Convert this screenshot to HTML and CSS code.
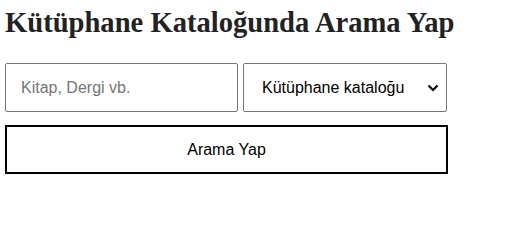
FILE: index.html
```html
<!DOCTYPE html>
<html>
<head>
    <title>Kütüphane Kataloğu</title>
    <link rel="stylesheet" href="styles.css">
</head>
<body>
    <h1>Kütüphane Kataloğunda Arama Yap</h1>

    <form class="search-form">
        <div class="search-row">
            <input type="text" id="searchInput" placeholder="Kitap, Dergi vb.">
            <div class="select-wrap">
                <select id="searchType">
                    <option>Kütüphane kataloğu</option>
                </select>
                <svg class="select-arrow" width="12" height="8" viewBox="0 0 12 8">
                    <path d="M1.5 1.5 L6 6 L10.5 1.5" fill="none" stroke="#000" stroke-width="2.2"/>
                </svg>
            </div>
        </div>
        <button type="button">Arama Yap</button>
    </form>
</body>
</html>
```

FILE: styles.css
```css
body {
    font-family: "Liberation Serif", serif;
    margin: 0;
    padding: 0 5px;
}
h1 {
    font-size: 28.6px;
    margin: 7px 0 24px;
    color: #222;
}
.search-form {
    width: 443px;
}
.search-row {
    display: flex;
    gap: 5px;
}
#searchInput {
    width: 233px;
    height: 49px;
    box-sizing: border-box;
    padding: 0 15px;
    border: 1px solid #767676;
    border-radius: 2px;
    font-family: "Liberation Sans", sans-serif;
    font-size: 16px;
}
#searchInput::placeholder {
    color: #757575;
}
.select-wrap {
    position: relative;
}
#searchType {
    appearance: none;
    width: 204px;
    height: 49px;
    box-sizing: border-box;
    padding: 0 30px 0 18px;
    border: 1px solid #767676;
    border-radius: 2px;
    background: white;
    font-family: "Liberation Sans", sans-serif;
    font-size: 16px;
    color: #000;
}
.select-arrow {
    position: absolute;
    right: 8px;
    top: 21px;
    pointer-events: none;
}
button {
    display: block;
    width: 443px;
    height: 49px;
    margin-top: 13px;
    background: white;
    border: 2px solid black;
    font-family: "Liberation Sans", sans-serif;
    font-size: 16px;
    color: #000;
    cursor: pointer;
}
```
